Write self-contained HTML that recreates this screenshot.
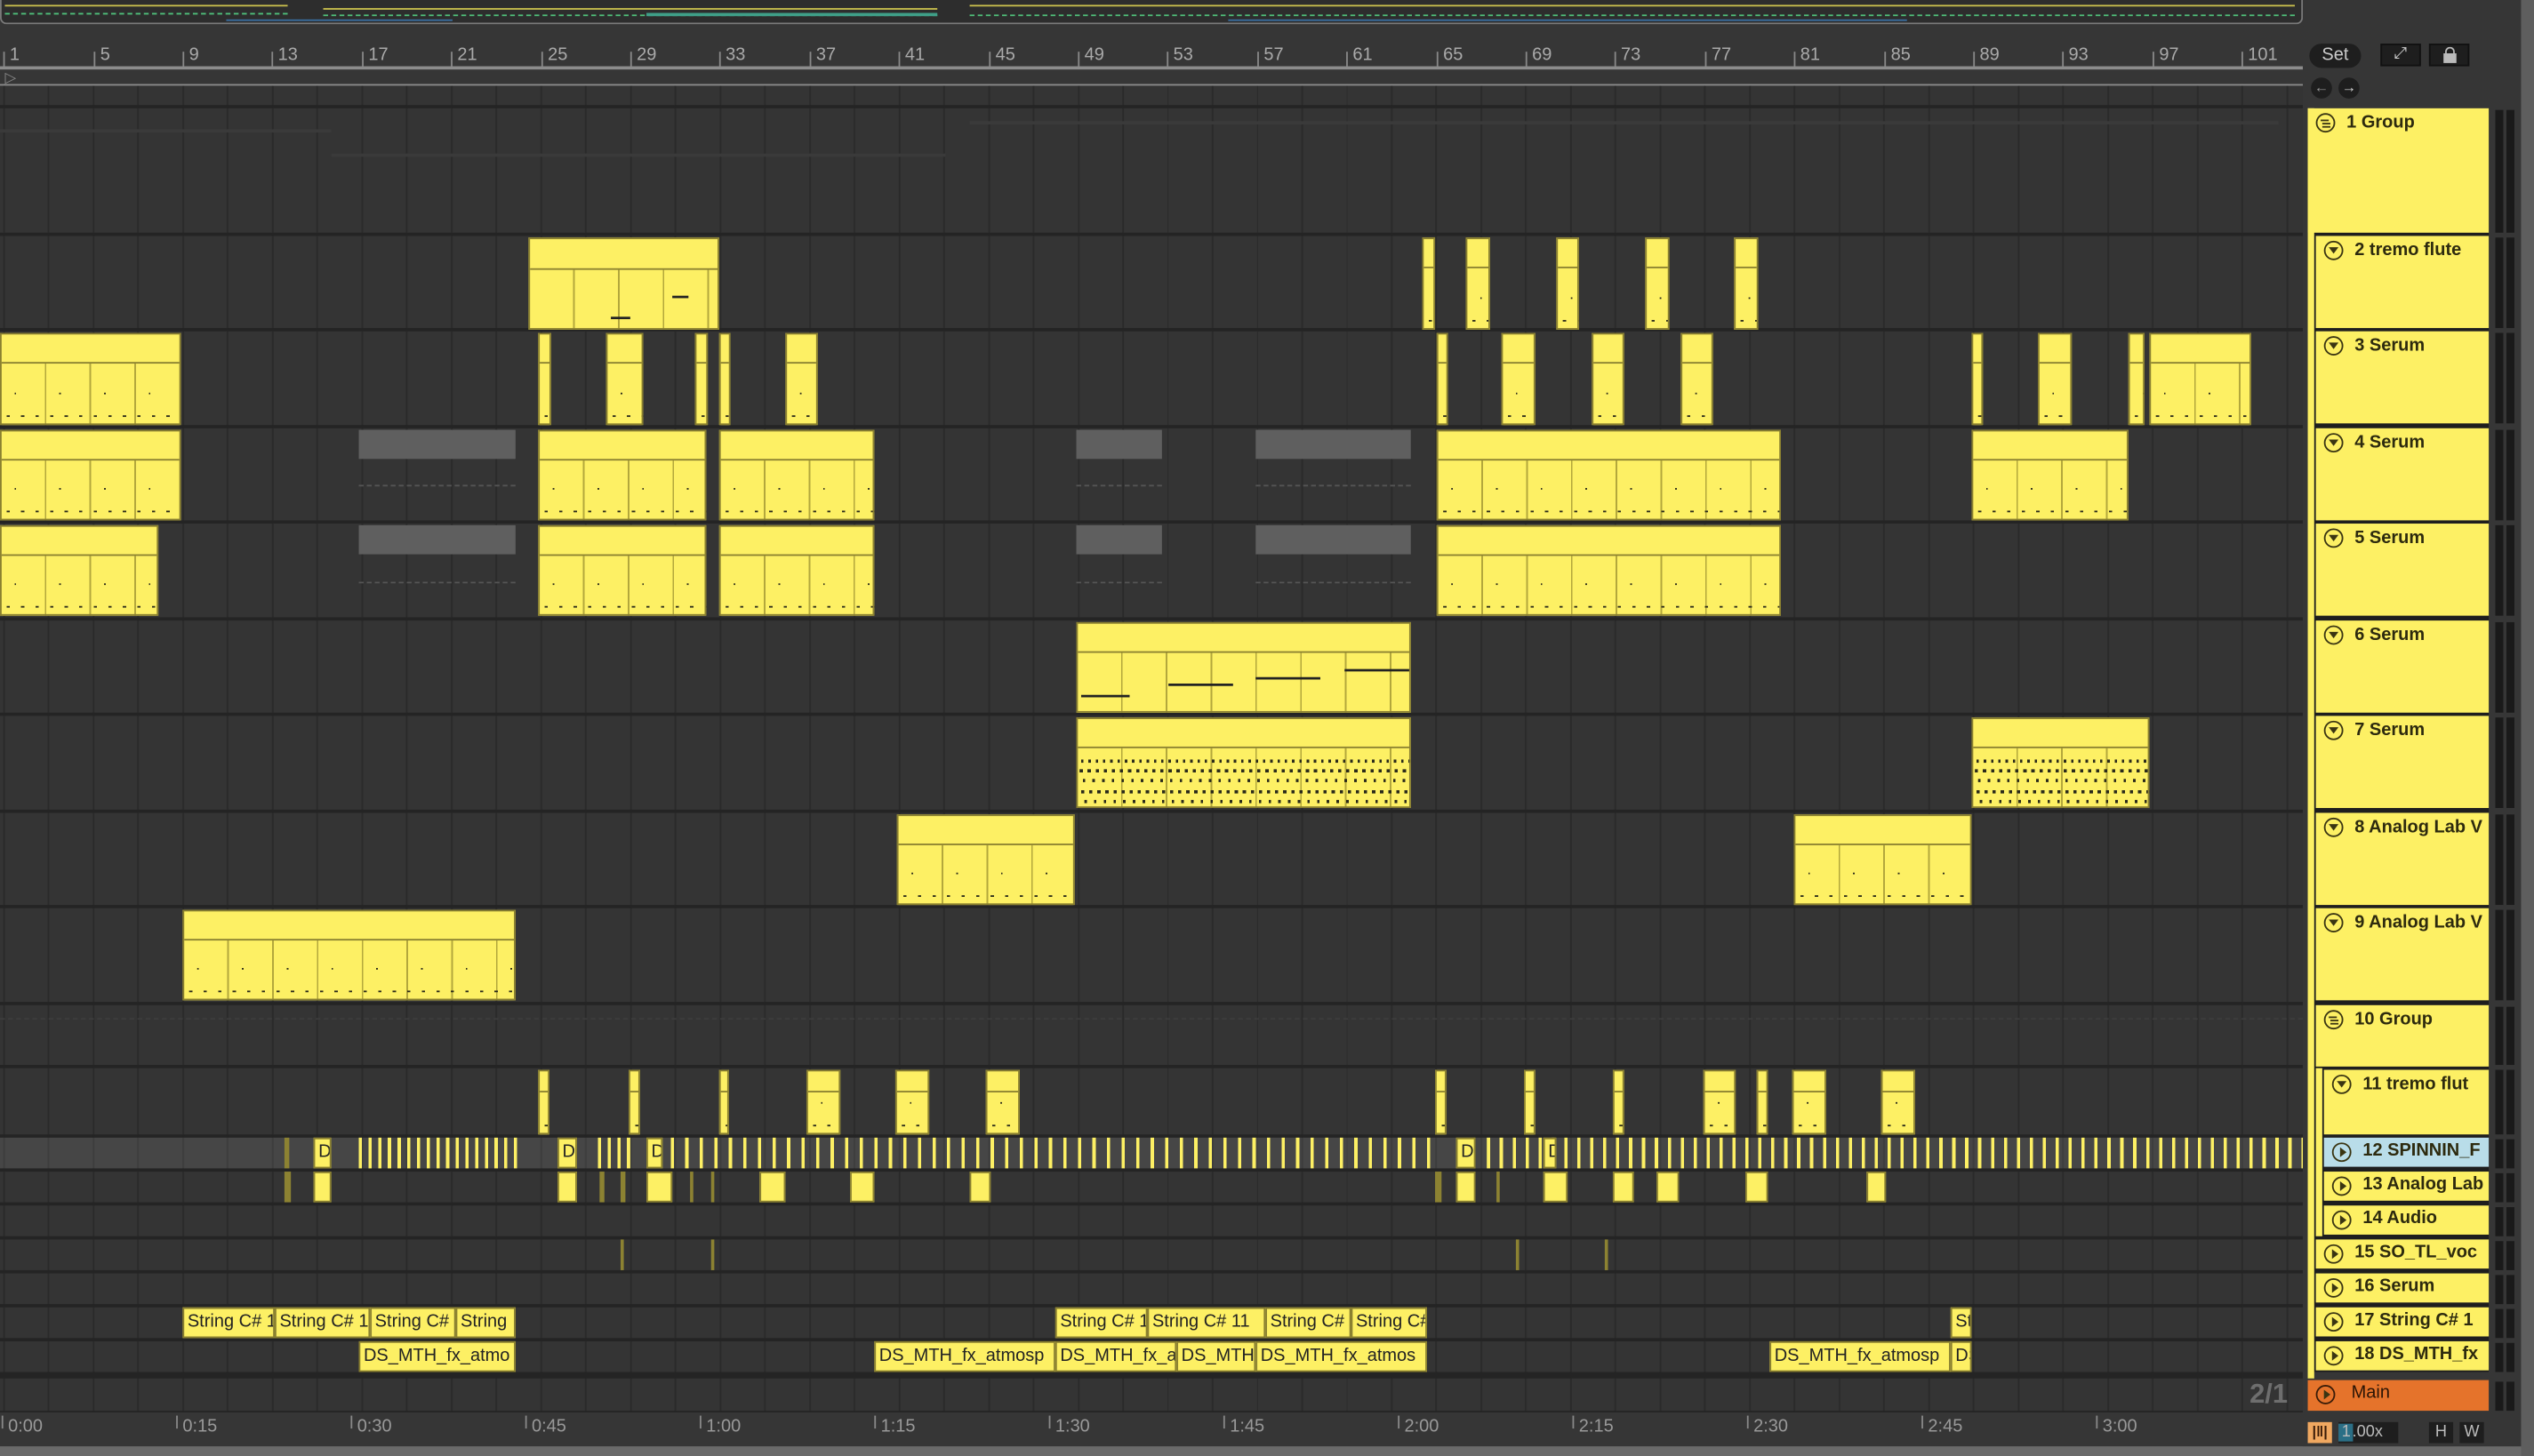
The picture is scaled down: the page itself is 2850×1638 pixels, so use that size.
<!DOCTYPE html>
<html><head><meta charset="utf-8"><style>
html,body{margin:0;padding:0;width:2850px;height:1638px;overflow:hidden;background:#1f1f1f}
#s{position:absolute;left:0;top:0;width:1568px;height:901px;transform:scale(1.8176,1.818);transform-origin:0 0;overflow:hidden;background:#363636;font-family:"Liberation Sans",sans-serif}
.a{position:absolute}
#arr{position:absolute;left:0;top:53px;width:1425px;height:820px;background:repeating-linear-gradient(90deg,#2a2a2a 0 1px,#343434 1px 27.7px);background-position:2px 0}
.sep{position:absolute;left:0;width:1425px;height:2px;background:#242424}
.c{position:absolute;box-sizing:border-box;border:1px solid #8a8030;--h:17px;
background:
repeating-linear-gradient(90deg,#2a2a1a 0 2px,transparent 2px 9px) 3px calc(100% - 4px)/100% 1px no-repeat,
repeating-linear-gradient(90deg,#2a2a1a 0 1px,transparent 1px 27.7px) 8px calc(100% - 18px)/100% 1px no-repeat,
linear-gradient(#8a8030,#8a8030) 0 var(--h)/100% 1px no-repeat,
repeating-linear-gradient(90deg,#fdf064 0 26.7px,#b3a73c 26.7px 27.7px) 0 calc(var(--h) + 1px)/100% 100% no-repeat,#fdf064}
.dn{background:
repeating-linear-gradient(90deg,#2a2a1a 0 1.5px,transparent 1.5px 4.5px) 2px 25px/100% 2px no-repeat,
repeating-linear-gradient(90deg,#2a2a1a 0 2px,transparent 2px 5px) 1px 31px/100% 2px no-repeat,
repeating-linear-gradient(90deg,#2a2a1a 0 1.5px,transparent 1.5px 6px) 3px 37px/100% 2px no-repeat,
repeating-linear-gradient(90deg,#2a2a1a 0 2px,transparent 2px 5px) 2px 44px/100% 2px no-repeat,
repeating-linear-gradient(90deg,#2a2a1a 0 1.5px,transparent 1.5px 6px) 4px 50px/100% 2px no-repeat,
linear-gradient(#8a8030,#8a8030) 0 17px/100% 1px no-repeat,
repeating-linear-gradient(90deg,#fdf064 0 26.7px,#b3a73c 26.7px 27.7px) 0 18px/100% 100% no-repeat,#fdf064}
.st{background:
linear-gradient(#222,#222) 2px 44px/30px 1.5px no-repeat,
linear-gradient(#222,#222) 56px 37px/40px 1.5px no-repeat,
linear-gradient(#222,#222) 110px 33px/40px 1.5px no-repeat,
linear-gradient(#222,#222) 165px 28px/40px 1.5px no-repeat,
linear-gradient(#8a8030,#8a8030) 0 17px/100% 1px no-repeat,
repeating-linear-gradient(90deg,#fdf064 0 26.7px,#b3a73c 26.7px 27.7px) 0 18px/100% 100% no-repeat,#fdf064}
.y{position:absolute;background:#fdf064;box-sizing:border-box;border:1px solid #8a8030}
.dim{position:absolute;background:#8c8232}
.g{position:absolute;background:#5f5f5f;height:18px}
.w{position:absolute;height:1px;border-top:1px dashed #555}
.r2{top:147px;height:57px}.r3{top:206px;height:57px}.r4{top:266px;height:56px}.r5{top:325px;height:56px}
.r6{top:385px;height:56px}.r7{top:444px;height:56px}.r8{top:504px;height:56px}.r9{top:563px;height:56px}
.r11{top:662px;height:40px}.r12{top:704px;height:19px}.r13{top:725px;height:19px}.r15{top:767px;height:19px}
.r17{top:809px;height:19px}.r18{top:830px;height:19px}
.r11{--h:12px}
.t{position:absolute;box-sizing:border-box;border:1px solid #8a8030;background:#fdf064;color:#222;font-size:11px;line-height:17px;padding-left:2px;white-space:nowrap;overflow:hidden}
.tk{position:absolute;top:704px;height:19px;background:repeating-linear-gradient(90deg,#fdf064 0 2px,transparent 2px 6px)}
.rul{position:absolute;top:28px;font-size:11px;color:#aaa}
.rul::before{content:"";position:absolute;left:-4px;top:4px;width:1px;height:9px;background:#888}
.tl{position:absolute;top:877px;font-size:11px;color:#999}
.tl::before{content:"";position:absolute;left:-4px;top:-1px;width:1px;height:8px;background:#888}
.h{position:absolute;left:1433px;width:107px;background:#fdf064;box-sizing:border-box;font-weight:bold;font-size:11px;color:#2d2a0e;white-space:nowrap;overflow:hidden}
.h span{position:absolute;left:24px;top:3px}
.h i{position:absolute;left:5px;top:3px;width:10px;height:10px;border:1.4px solid #3a3512;border-radius:50%}
.h i.d::after{content:"";position:absolute;left:2px;top:3px;border-left:3px solid transparent;border-right:3px solid transparent;border-top:4px solid #3a3512}
.h i.p::after{content:"";position:absolute;left:3.5px;top:2px;border-top:3px solid transparent;border-bottom:3px solid transparent;border-left:4px solid #3a3512}
.h i.gr::after{content:"";position:absolute;left:2px;top:2.5px;width:6px;height:5px;background:linear-gradient(#3a3512,#3a3512) 0 0/5px 1.2px no-repeat,linear-gradient(#3a3512,#3a3512) 1px 2px/5px 1.2px no-repeat,linear-gradient(#3a3512,#3a3512) 1px 4px/5px 1.2px no-repeat}
.m{position:absolute;left:1543px;width:15px;background:linear-gradient(90deg,transparent 0 1px,#1a1a1a 1px 6px,transparent 6px 8px,#1a1a1a 8px 13px,transparent 13px)}
</style></head><body><div id="s">

<!-- overview -->
<div class="a" style="left:0;top:0;width:1425px;height:15px;background:#2d2d2d;border:1.5px solid #7a7a7a;border-top:none;border-radius:0 0 4px 4px;box-sizing:border-box"></div>
<div class="a" style="left:3px;top:3px;width:175px;height:1px;background:#c9bf4e"></div>
<div class="a" style="left:3px;top:8px;width:175px;height:1px;border-top:1px dashed #4fbf7a"></div>
<div class="a" style="left:200px;top:5px;width:380px;height:1px;background:#c9bf4e"></div>
<div class="a" style="left:200px;top:9px;width:380px;height:1px;border-top:1px dashed #4fbf7a"></div>
<div class="a" style="left:140px;top:12px;width:140px;height:1px;background:#3a6fa0"></div>
<div class="a" style="left:400px;top:8px;width:180px;height:2px;background:#3f9f88"></div>
<div class="a" style="left:600px;top:3px;width:820px;height:1px;background:#c9bf4e"></div>
<div class="a" style="left:600px;top:9px;width:820px;height:1px;border-top:1px dashed #4fbf7a"></div>
<div class="a" style="left:760px;top:12px;width:420px;height:1px;background:#3a6fa0"></div>

<!-- ruler -->
<div class="a" style="left:0;top:41px;width:1425px;height:1.5px;background:#8c8c8c"></div>
<div class="a" style="left:0;top:52px;width:1425px;height:1.5px;background:#8c8c8c"></div>
<div class="a" style="left:3px;top:43px;font-size:9px;color:#888">▷</div>
<div class="a" style="left:1px;top:60px;border-left:4px solid transparent;border-right:4px solid transparent;border-top:5px solid #4ab0d0"></div>
<div class="rul" style="left:6px">1</div><div class="rul" style="left:62px">5</div><div class="rul" style="left:117px">9</div><div class="rul" style="left:172px">13</div><div class="rul" style="left:228px">17</div><div class="rul" style="left:283px">21</div><div class="rul" style="left:339px">25</div><div class="rul" style="left:394px">29</div><div class="rul" style="left:449px">33</div><div class="rul" style="left:505px">37</div><div class="rul" style="left:560px">41</div><div class="rul" style="left:616px">45</div><div class="rul" style="left:671px">49</div><div class="rul" style="left:726px">53</div><div class="rul" style="left:782px">57</div><div class="rul" style="left:837px">61</div><div class="rul" style="left:893px">65</div><div class="rul" style="left:948px">69</div><div class="rul" style="left:1003px">73</div><div class="rul" style="left:1059px">77</div><div class="rul" style="left:1114px">81</div><div class="rul" style="left:1170px">85</div><div class="rul" style="left:1225px">89</div><div class="rul" style="left:1280px">93</div><div class="rul" style="left:1336px">97</div><div class="rul" style="left:1391px">101</div>

<!-- arrangement -->
<div id="arr"></div>
<div class="sep" style="top:65px"></div><div class="sep" style="top:144px"></div><div class="sep" style="top:203px"></div><div class="sep" style="top:263px"></div><div class="sep" style="top:322px"></div><div class="sep" style="top:382px"></div><div class="sep" style="top:441px"></div><div class="sep" style="top:501px"></div><div class="sep" style="top:560px"></div><div class="sep" style="top:620px"></div><div class="sep" style="top:659px"></div><div class="sep" style="top:702px"></div><div class="sep" style="top:723px"></div><div class="sep" style="top:744px"></div><div class="sep" style="top:765px"></div><div class="sep" style="top:786px"></div><div class="sep" style="top:807px"></div><div class="sep" style="top:828px"></div><div class="sep" style="top:849px;height:4px"></div><div class="sep" style="top:873px;height:1px"></div>
<div class="a" style="left:0;top:704px;width:1425px;height:19px;background:rgba(255,255,255,0.09)"></div>
<!-- faint group lane marks -->
<div class="a" style="left:0;top:80px;width:205px;height:2px;background:#3a3a3a"></div>
<div class="a" style="left:600px;top:75px;width:810px;height:2px;background:#3a3a3a"></div>
<div class="a" style="left:205px;top:95px;width:380px;height:2px;background:#3a3a3a"></div>
<div class="a" style="left:0;top:630px;width:1425px;height:1px;border-top:1px dashed #3d3d3d"></div>

<!-- row 2 -->
<div class="c r2" style="left:327px;width:118px;--h:18px;background:linear-gradient(#222,#222) 50px 48px/12px 1.5px no-repeat,linear-gradient(#222,#222) 88px 35px/10px 1.5px no-repeat,linear-gradient(#8a8030,#8a8030) 0 18px/100% 1px no-repeat,repeating-linear-gradient(90deg,#fdf064 0 26.7px,#b3a73c 26.7px 27.7px) 0 19px/100% 100% no-repeat,#fdf064"></div>
<div class="c r2" style="left:880px;width:8px"></div><div class="c r2" style="left:907px;width:15px"></div><div class="c r2" style="left:963px;width:14px"></div><div class="c r2" style="left:1018px;width:15px"></div><div class="c r2" style="left:1073px;width:15px"></div>
<!-- row 3 -->
<div class="c r3" style="left:0;width:112px"></div>
<div class="c r3" style="left:333px;width:8px"></div><div class="c r3" style="left:375px;width:23px"></div><div class="c r3" style="left:430px;width:8px"></div><div class="c r3" style="left:445px;width:7px"></div><div class="c r3" style="left:486px;width:20px"></div>
<div class="c r3" style="left:889px;width:7px"></div><div class="c r3" style="left:929px;width:21px"></div><div class="c r3" style="left:985px;width:20px"></div><div class="c r3" style="left:1040px;width:20px"></div>
<div class="c r3" style="left:1220px;width:7px"></div><div class="c r3" style="left:1261px;width:21px"></div><div class="c r3" style="left:1317px;width:10px"></div><div class="c r3" style="left:1330px;width:63px"></div>
<!-- row 4 -->
<div class="c r4" style="left:0;width:112px"></div>
<div class="g" style="left:222px;top:266px;width:97px"></div><div class="w" style="left:222px;top:300px;width:97px"></div>
<div class="c r4" style="left:333px;width:104px"></div><div class="c r4" style="left:445px;width:96px"></div>
<div class="g" style="left:666px;top:266px;width:53px"></div><div class="w" style="left:666px;top:300px;width:53px"></div>
<div class="g" style="left:777px;top:266px;width:96px"></div><div class="w" style="left:777px;top:300px;width:96px"></div>
<div class="c r4" style="left:889px;width:213px"></div><div class="c r4" style="left:1220px;width:97px"></div>
<!-- row 5 -->
<div class="c r5" style="left:0;width:98px"></div>
<div class="g" style="left:222px;top:325px;width:97px"></div><div class="w" style="left:222px;top:360px;width:97px"></div>
<div class="c r5" style="left:333px;width:104px"></div><div class="c r5" style="left:445px;width:96px"></div>
<div class="g" style="left:666px;top:325px;width:53px"></div><div class="w" style="left:666px;top:360px;width:53px"></div>
<div class="g" style="left:777px;top:325px;width:96px"></div><div class="w" style="left:777px;top:360px;width:96px"></div>
<div class="c r5" style="left:889px;width:213px"></div>
<!-- row 6 -->
<div class="c st r6" style="left:666px;width:207px"></div>
<!-- row 7 -->
<div class="c dn r7" style="left:666px;width:207px"></div><div class="c dn r7" style="left:1220px;width:110px"></div>
<!-- row 8 -->
<div class="c r8" style="left:555px;width:110px"></div><div class="c r8" style="left:1110px;width:110px"></div>
<!-- row 9 -->
<div class="c r9" style="left:113px;width:206px"></div>
<!-- row 11 -->
<div class="c r11" style="left:333px;width:7px"></div><div class="c r11" style="left:389px;width:7px"></div><div class="c r11" style="left:445px;width:6px"></div><div class="c r11" style="left:499px;width:21px"></div><div class="c r11" style="left:554px;width:21px"></div><div class="c r11" style="left:610px;width:21px"></div>
<div class="c r11" style="left:888px;width:7px"></div><div class="c r11" style="left:943px;width:7px"></div><div class="c r11" style="left:998px;width:7px"></div><div class="c r11" style="left:1054px;width:20px"></div><div class="c r11" style="left:1087px;width:7px"></div><div class="c r11" style="left:1109px;width:21px"></div><div class="c r11" style="left:1164px;width:21px"></div>
<!-- row 12 ticks -->
<div class="dim" style="left:176px;top:704px;width:3px;height:19px"></div>
<div class="tk" style="left:222px;width:100px"></div>
<div class="tk" style="left:370px;width:20px"></div>
<div class="tk" style="left:415px;width:470px;background:repeating-linear-gradient(90deg,#fdf064 0 2px,transparent 2px 9px)"></div>
<div class="tk" style="left:920px;width:505px;background:repeating-linear-gradient(90deg,#fdf064 0 2px,transparent 2px 8px)"></div>
<div class="t r12" style="left:194px;width:11px;line-height:17px">D</div>
<div class="t r12" style="left:345px;width:12px">D</div>
<div class="t r12" style="left:400px;width:10px">D</div>
<div class="t r12" style="left:901px;width:12px">D</div>
<div class="t r12" style="left:955px;width:8px">D</div>
<!-- row 13 -->
<div class="dim" style="left:176px;top:725px;width:4px;height:19px"></div>
<div class="y r13" style="left:194px;width:11px"></div><div class="y r13" style="left:345px;width:12px"></div>
<div class="dim" style="left:371px;top:725px;width:3px;height:19px"></div><div class="dim" style="left:384px;top:725px;width:3px;height:19px"></div>
<div class="y r13" style="left:400px;width:16px"></div><div class="dim" style="left:427px;top:725px;width:2px;height:19px"></div><div class="dim" style="left:440px;top:725px;width:2px;height:19px"></div>
<div class="y r13" style="left:470px;width:16px"></div><div class="y r13" style="left:526px;width:15px"></div><div class="y r13" style="left:600px;width:13px"></div>
<div class="dim" style="left:888px;top:725px;width:4px;height:19px"></div><div class="y r13" style="left:901px;width:12px"></div><div class="dim" style="left:926px;top:725px;width:2px;height:19px"></div>
<div class="y r13" style="left:955px;width:15px"></div><div class="y r13" style="left:998px;width:13px"></div><div class="y r13" style="left:1025px;width:14px"></div><div class="y r13" style="left:1080px;width:14px"></div><div class="y r13" style="left:1155px;width:12px"></div>
<!-- row 15 -->
<div class="dim" style="left:384px;top:767px;width:1.5px;height:19px"></div><div class="dim" style="left:440px;top:767px;width:1.5px;height:19px"></div><div class="dim" style="left:938px;top:767px;width:1.5px;height:19px"></div><div class="dim" style="left:993px;top:767px;width:1.5px;height:19px"></div>
<!-- row 17 -->
<div class="t r17" style="left:113px;width:57px">String C# 1</div><div class="t r17" style="left:170px;width:59px">String C# 1</div><div class="t r17" style="left:229px;width:53px">String C#</div><div class="t r17" style="left:282px;width:37px">String</div>
<div class="t r17" style="left:653px;width:57px">String C# 1</div><div class="t r17" style="left:710px;width:73px">String C# 11</div><div class="t r17" style="left:783px;width:53px">String C#</div><div class="t r17" style="left:836px;width:47px">String C#</div>
<div class="t r17" style="left:1207px;width:13px">St</div>
<!-- row 18 -->
<div class="t r18" style="left:222px;width:97px">DS_MTH_fx_atmo</div>
<div class="t r18" style="left:541px;width:112px">DS_MTH_fx_atmosp</div><div class="t r18" style="left:653px;width:75px">DS_MTH_fx_a</div><div class="t r18" style="left:728px;width:49px">DS_MTH</div><div class="t r18" style="left:777px;width:106px">DS_MTH_fx_atmos</div>
<div class="t r18" style="left:1095px;width:112px">DS_MTH_fx_atmosp</div><div class="t r18" style="left:1207px;width:13px">DS</div>

<!-- time ruler -->
<div class="tl" style="left:5px">0:00</div><div class="tl" style="left:113px">0:15</div><div class="tl" style="left:221px">0:30</div><div class="tl" style="left:329px">0:45</div><div class="tl" style="left:437px">1:00</div><div class="tl" style="left:545px">1:15</div><div class="tl" style="left:653px">1:30</div><div class="tl" style="left:761px">1:45</div><div class="tl" style="left:869px">2:00</div><div class="tl" style="left:977px">2:15</div><div class="tl" style="left:1085px">2:30</div><div class="tl" style="left:1193px">2:45</div><div class="tl" style="left:1301px">3:00</div>
<div class="a" style="left:0;top:895px;width:1568px;height:6px;background:#6a6a6a"></div>
<div class="a" style="left:1392px;top:853px;font-size:17px;font-weight:bold;color:#6e6e6e">2/1</div>

<!-- right panel -->
<div class="a" style="left:1425px;top:16px;width:135px;height:879px;background:#363636"></div>
<div class="a" style="left:1560px;top:0;width:8px;height:901px;background:#5e5e5e"></div>
<div class="a" style="left:1429px;top:27px;width:32px;height:15px;border-radius:8px;background:#1e1e1e;color:#ccc;font-size:11px;text-align:center;line-height:15px">Set</div>
<div class="a" style="left:1473px;top:27px;width:25px;height:14px;background:#1e1e1e;border:1px solid #111;box-sizing:border-box;color:#ccc;font-size:10px;text-align:center;line-height:12px">⤢</div>
<div class="a" style="left:1503px;top:27px;width:25px;height:14px;background:#1e1e1e;border:1px solid #111;box-sizing:border-box"><div class="a" style="left:8px;top:5px;width:8px;height:6px;background:#bbb"></div><div class="a" style="left:9px;top:1px;width:4px;height:5px;border:1px solid #bbb;border-bottom:none;border-radius:3px 3px 0 0"></div></div>
<div class="a" style="left:1430px;top:48px;width:13px;height:13px;border-radius:50%;background:#1e1e1e;color:#999;font-size:9px;text-align:center;line-height:13px">←</div>
<div class="a" style="left:1447px;top:48px;width:13px;height:13px;border-radius:50%;background:#1e1e1e;color:#ddd;font-size:9px;text-align:center;line-height:13px">→</div>
<div class="a" style="left:1428px;top:67px;width:112px;height:782px;background:#1e1e1e"></div>
<div class="a" style="left:1428px;top:67px;width:4px;height:786px;background:#fdf064"></div>
<div class="a" style="left:1433px;top:661px;width:4px;height:104px;background:#fdf064"></div>

<div class="h" style="left:1428px;width:112px;top:67px;height:77px"><i class="gr"></i><span>1 Group</span></div>
<div class="h" style="top:146px;height:57px"><i class="d"></i><span>2 tremo flute</span></div>
<div class="h" style="top:205px;height:57px"><i class="d"></i><span>3 Serum</span></div>
<div class="h" style="top:265px;height:57px"><i class="d"></i><span>4 Serum</span></div>
<div class="h" style="top:324px;height:57px"><i class="d"></i><span>5 Serum</span></div>
<div class="h" style="top:384px;height:57px"><i class="d"></i><span>6 Serum</span></div>
<div class="h" style="top:443px;height:57px"><i class="d"></i><span>7 Serum</span></div>
<div class="h" style="top:503px;height:57px"><i class="d"></i><span>8 Analog Lab V</span></div>
<div class="h" style="top:562px;height:57px"><i class="d"></i><span>9 Analog Lab V</span></div>
<div class="h" style="top:622px;height:38px"><i class="gr"></i><span>10 Group</span></div>
<div class="h" style="left:1438px;width:102px;top:662px;height:40px"><i class="d"></i><span>11 tremo flut</span></div>
<div class="h" style="left:1438px;width:102px;top:704px;height:18px;background:#b9dde9"><i class="p" style="top:2.5px"></i><span style="top:2px">12 SPINNIN_F</span></div>
<div class="h" style="left:1438px;width:102px;top:725px;height:18px"><i class="p" style="top:2.5px"></i><span style="top:2px">13 Analog Lab</span></div>
<div class="h" style="left:1438px;width:102px;top:746px;height:18px"><i class="p" style="top:2.5px"></i><span style="top:2px">14 Audio</span></div>
<div class="h" style="top:767px;height:18px"><i class="p" style="top:2.5px"></i><span style="top:2px">15 SO_TL_voc</span></div>
<div class="h" style="top:788px;height:18px"><i class="p" style="top:2.5px"></i><span style="top:2px">16 Serum</span></div>
<div class="h" style="top:809px;height:18px"><i class="p" style="top:2.5px"></i><span style="top:2px">17 String C# 1</span></div>
<div class="h" style="top:830px;height:18px"><i class="p" style="top:2.5px"></i><span style="top:2px">18 DS_MTH_fx</span></div>
<div class="h" style="left:1428px;width:112px;top:854px;height:19px;background:#e5732b;font-weight:normal;color:#2a1405"><i class="p" style="top:2.5px;border-color:#3a1c08"></i><span style="top:2px;left:27px">Main</span></div>

<div class="m" style="top:68px;height:76px"></div><div class="m" style="top:147px;height:56px"></div><div class="m" style="top:206px;height:56px"></div><div class="m" style="top:266px;height:56px"></div><div class="m" style="top:325px;height:56px"></div><div class="m" style="top:385px;height:56px"></div><div class="m" style="top:444px;height:56px"></div><div class="m" style="top:504px;height:56px"></div><div class="m" style="top:563px;height:56px"></div><div class="m" style="top:623px;height:36px"></div><div class="m" style="top:662px;height:40px"></div><div class="m" style="top:705px;height:18px"></div><div class="m" style="top:726px;height:18px"></div><div class="m" style="top:747px;height:18px"></div><div class="m" style="top:768px;height:18px"></div><div class="m" style="top:789px;height:18px"></div><div class="m" style="top:810px;height:18px"></div><div class="m" style="top:831px;height:18px"></div><div class="m" style="top:855px;height:18px"></div>

<div class="a" style="left:1428px;top:880px;width:15px;height:13px;background:#f0a860;color:#3a1c08;font-size:9px;text-align:center;line-height:13px;font-weight:bold">|‖|</div>
<div class="a" style="left:1447px;top:880px;width:37px;height:13px;background:#1e1e1e;color:#bbb;font-size:10px;line-height:13px"><span style="background:#2b6f86;padding:0 1px 0 2px">1</span>.00x</div>
<div class="a" style="left:1503px;top:880px;width:15px;height:13px;background:#1e1e1e;color:#bbb;font-size:10px;text-align:center;line-height:13px">H</div>
<div class="a" style="left:1522px;top:880px;width:15px;height:13px;background:#1e1e1e;color:#bbb;font-size:10px;text-align:center;line-height:13px">W</div>
</div></body></html>
